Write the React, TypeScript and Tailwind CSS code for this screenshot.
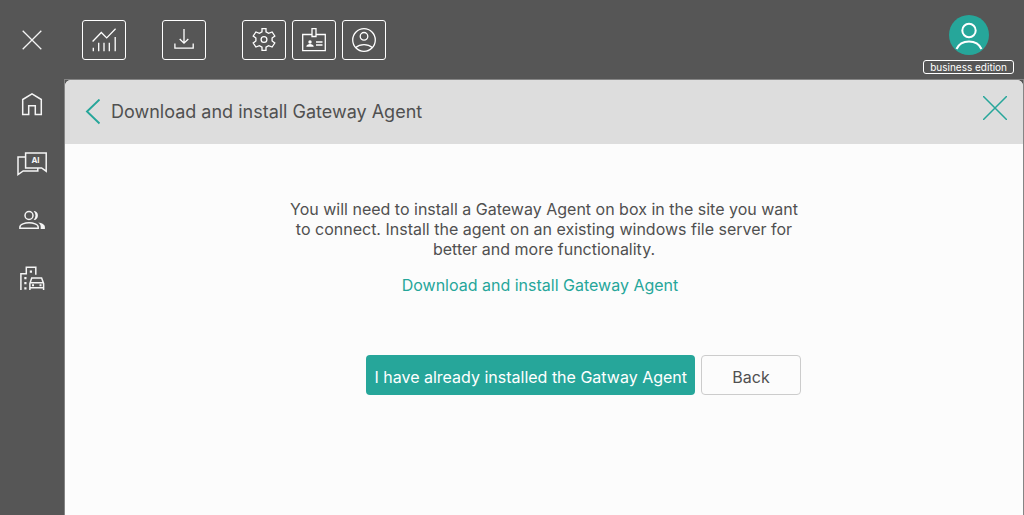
import type { ReactNode } from 'react';

function ToolButton({ label, children }: { label: string; children: ReactNode }) {
  return (
    <button
      type="button"
      aria-label={label}
      className="flex h-10 w-11 items-center justify-center rounded-[3px] border border-white pb-px text-white"
    >
      <svg viewBox="0 0 24 24" className="size-6" fill="none" stroke="currentColor" strokeWidth="1.3">
        {children}
      </svg>
    </button>
  );
}

function SideLink({ label, children }: { label: string; children: ReactNode }) {
  return (
    <a href="#" aria-label={label} className="flex h-[58px] w-full items-center justify-center text-neutral-100">
      <svg viewBox="0 0 32 32" className="size-8" fill="none" stroke="currentColor" strokeWidth="1.5">
        {children}
      </svg>
    </a>
  );
}

function Sidebar() {
  return (
    <nav className="flex w-16 shrink-0 flex-col items-center">
      <button type="button" aria-label="Close menu" className="flex h-[75px] w-full items-center justify-center pt-1 text-neutral-100">
        <svg viewBox="0 0 20 20" className="size-5" fill="none" stroke="currentColor" strokeWidth="1.3">
          <path d="M.7.7l18.600 18.600M19.300.7L.7 19.300" />
        </svg>
      </button>
      <SideLink label="Home">
        <path d="M6.700 11.500L16 5.900l9.300 5.600v14.900h-6v-8.600h-6.600v8.600h-6z" />
      </SideLink>
      <SideLink label="AI chat">
        <path d="M9.600 7h20.600v18.200l-4.600-3.200H9.600z" />
        <path d="M9.600 11H2v17.600l5.200-3.600h14.600v-3" />
        <text
          x="19.500"
          y="17"
          textAnchor="middle"
          fill="currentColor"
          stroke="none"
          className="font-['Inter',sans-serif] text-[8px] font-bold"
        >
          AI
        </text>
      </SideLink>
      <SideLink label="Users">
        <circle cx="13" cy="11.500" r="4" />
        <path d="M3.900 24.300v-1.400c0-2.500 5-4.200 9.100-4.200s9.200 1.700 9.200 4.200v1.400z" />
        <path d="M17.700 7c5.600-.5 5.600 9.300 0 9 2.400-2.800 2.400-6.200 0-9zM22.300 18.500c3.800.6 6.600 2 6.600 4.500v2.100h-4.200V23c0-2-.8-3.300-2.400-4.500z" fill="currentColor" stroke="none" />
      </SideLink>
      <SideLink label="Sites">
        <path d="M4.900 28V11.700h5.400V5.200h9.500v7.600M13.900 28v-6.500l1.800-5.400h9.900l2 5.400V28M13.900 25.700h13.700M13.900 20.700h13.700" />
        <path d="M13.800 8.500h2.200v2.200h-2.200zM8.300 15h2.200v2.200H8.300zM8.300 20h2.200v2.200H8.300zM8.300 25.300h2.200v2.200H8.300zM16 22.200h2v2h-2zM23.500 22.200h2v2h-2z" fill="currentColor" stroke="none" />
      </SideLink>
    </nav>
  );
}

function TopBar() {
  return (
    <header className="flex h-[79px] items-start justify-between pl-[18px] pr-2.5">
      <div className="flex gap-9 pt-5">
        <ToolButton label="Statistics">
          <path d="M.6 13.500L9.300 4.500l5.400 5.400L23.600.8M1.300 23.200v-3.500M6.700 23.200v-8.500M12 23.200v-8.500M17.300 23.200v-8.500M23.200 23.200V9" />
        </ToolButton>
        <ToolButton label="Downloads">
          <path d="M12 1v14M7.700 11l4.300 4.200 4.300-4.200M2.900 15.500v4.700h18.300v-4.700" />
        </ToolButton>
        <div className="flex gap-1.5">
          <ToolButton label="Settings">
            <path d="M10 .7h4v3.200l2.600 1.500 3.500-1.400 2.700 4-2.700 2v3l2.700 2-2.700 4-3.500-1.400-2.600 1.500v3.200h-4v-3.200l-2.600-1.500L3.900 19l-2.700-4 2.700-2v-3L1.200 8l2.700-4 3.500 1.400L10 3.900z" />
            <circle cx="12" cy="11.500" r="2.900" />
          </ToolButton>
          <ToolButton label="Business card">
            <path d="M10 6.500H.7v16.200h22.600V6.500H14M10 .700h4v7.800h-4z" />
            <circle cx="8" cy="14" r="1.700" fill="currentColor" stroke="none" />
            <path d="M4.300 18.800c0-3.600 7.400-3.600 7.400 0z" fill="currentColor" stroke="none" />
            <path d="M14 14h6.500M14 17h6.500" />
          </ToolButton>
          <ToolButton label="Profile">
            <circle cx="12" cy="12" r="11.300" />
            <circle cx="12" cy="8.300" r="3.800" />
            <path d="M3.700 19.600c4.500-4 12.100-4 16.600 0" />
          </ToolButton>
        </div>
      </div>
      <div className="flex flex-col items-center gap-[5px] pt-[15px]">
        <button type="button" aria-label="Account" className="size-10 rounded-full bg-[#26a69a] text-white">
          <svg viewBox="0 0 40 40" className="size-10" fill="none" stroke="currentColor" strokeWidth="2">
            <circle cx="20" cy="15.500" r="6.700" />
            <path d="M7.500 34c4.500-10 20.500-10 25 0" />
          </svg>
        </button>
        <span className="rounded-[3px] border border-white px-1.5 text-[10px] leading-3 text-white">business edition</span>
      </div>
    </header>
  );
}

export default function App() {
  return (
    <div className="flex min-h-screen bg-[#565656] font-['Inter',sans-serif] text-[#505050]">
      <Sidebar />
      <div className="flex min-w-0 flex-1 flex-col">
        <TopBar />
        <div className="flex flex-1 flex-col border-x border-t border-[#858585]">
          <main className="flex flex-1 flex-col overflow-hidden rounded-t-md bg-[#fcfcfc]">
            <div className="flex h-16 items-center justify-between bg-[#dddddd] pl-5 pr-4">
              <div className="flex items-center gap-2.5">
                <button type="button" aria-label="Go back" className="text-[#26a69a]">
                  <svg viewBox="0 0 16 26" className="h-[26px] w-4" fill="none" stroke="currentColor" strokeWidth="1.900">
                    <path d="M14.500 .5L2 12.500l12.500 12" />
                  </svg>
                </button>
                <h1 className="text-lg">Download and install Gateway Agent</h1>
              </div>
              <button type="button" aria-label="Close" className="mb-2 text-[#26a69a]">
                <svg viewBox="0 0 24 24" className="size-6" fill="none" stroke="currentColor" strokeWidth="1.500">
                  <path d="M0 0l24 24M24 0L0 24" />
                </svg>
              </button>
            </div>
            <section className="mx-auto flex w-full max-w-[514px] flex-col items-center pt-[55px] text-base leading-5">
              <p className="text-center">
                You will need to install a Gateway Agent on box in the site you want to connect. Install the agent on an
                existing windows file server for better and more functionality.
              </p>
              <a href="#" className="mt-4 pr-2 text-[#26a69a]">
                Download and install Gateway Agent
              </a>
              <div className="mt-[60px] flex gap-1.5 self-end">
                <button type="button" className="h-10 rounded bg-[#26a69a] px-2 pt-1 text-white">
                  I have already installed the Gatway Agent
                </button>
                <button type="button" className="h-10 w-[100px] rounded border border-[#cccccc] pt-1">
                  Back
                </button>
              </div>
            </section>
          </main>
        </div>
      </div>
    </div>
  );
}
